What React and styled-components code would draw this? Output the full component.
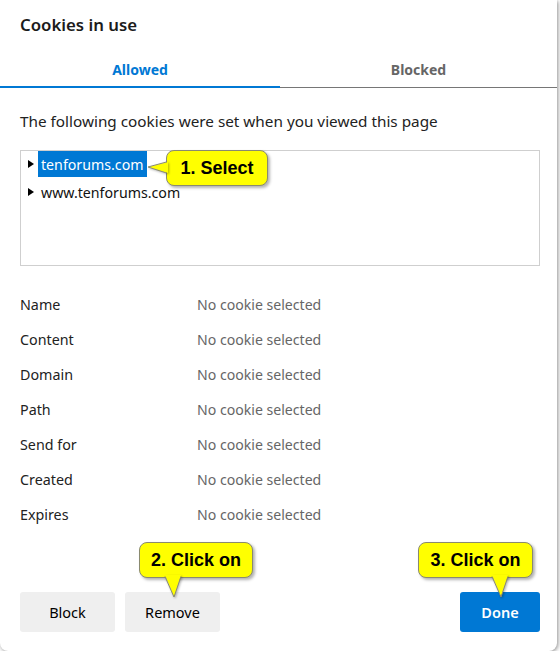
import { Fragment } from "react";
import styled, { createGlobalStyle } from "styled-components";

const GlobalStyle = createGlobalStyle`
  html, body {
    margin: 0;
    padding: 0;
    background: #fff;
  }
  body {
    font-family: "Noto Sans", "Open Sans", sans-serif;
  }
`;

const Dialog = styled.div`
  width: 557px;
  height: 651px;
  background: #fff;
  border-radius: 0 0 8px 8px;
  box-shadow: 1px 1px 4px rgba(0, 0, 0, 0.45);
  display: flex;
  flex-direction: column;
  box-sizing: border-box;
`;

const Title = styled.h1`
  margin: 0;
  padding: 13px 20px 0;
  font-size: 16.8px;
  line-height: 24px;
  font-weight: 600;
  color: #1b1b1b;
`;

const Tabs = styled.div`
  margin-top: 15px;
  display: grid;
  grid-template-columns: 280px 1fr;
`;

const Tab = styled.div`
  height: 34px;
  display: flex;
  align-items: center;
  justify-content: center;
  font-size: 14px;
  font-weight: 700;
  color: ${({ active }) => (active ? "#0078d4" : "#666")};
  border-bottom: ${({ active }) => (active ? "2px solid #0078d4" : "1px solid #767676")};
  padding-bottom: ${({ active }) => (active ? "0" : "1px")};
`;

const Body = styled.div`
  padding: 0 17px 0 20px;
`;

const Intro = styled.p`
  margin: 22px 0 0;
  font-size: 15.3px;
  line-height: 22px;
  color: #222;
`;

const TreeBox = styled.div`
  position: relative;
  margin-top: 18px;
  width: 520px;
  height: 116px;
  border: 1px solid #cfcfcf;
  box-sizing: border-box;
  padding: 0 0 0 7px;
  display: flex;
  flex-direction: column;
  gap: 2px;
`;

const TreeItem = styled.div`
  height: 26px;
  display: flex;
  align-items: center;
  gap: 4px;
`;

const Caret = styled.span`
  width: 0;
  height: 0;
  border-top: 4px solid transparent;
  border-bottom: 4px solid transparent;
  border-left: 6px solid #000;
`;

const ItemLabel = styled.span`
  height: 26px;
  display: flex;
  align-items: center;
  padding: 0 3px;
  font-size: 14.2px;
  color: ${({ selected }) => (selected ? "#fff" : "#111")};
  background: ${({ selected }) => (selected ? "#0078d4" : "transparent")};
`;

const Details = styled.div`
  margin-top: 21px;
  display: grid;
  grid-template-columns: 177px 1fr;
  grid-auto-rows: 35px;
  align-items: center;
  font-size: 14.3px;
`;

const Label = styled.div`
  color: #222;
`;

const Value = styled.div`
  color: #666;
  font-size: 14.1px;
`;

const Footer = styled.div`
  margin-top: auto;
  padding: 0 17px 19px 20px;
  display: flex;
  align-items: center;
  gap: 10px;
`;

const Anchor = styled.div`
  position: relative;
  margin-left: ${({ push }) => (push ? "auto" : "0")};
`;

const Button = styled.button`
  height: 40px;
  width: ${({ w }) => w}px;
  border: none;
  border-radius: 3px;
  font-family: "Noto Sans", "Open Sans", sans-serif;
  font-size: 14.5px;
  font-weight: ${({ primary }) => (primary ? 600 : 400)};
  background: ${({ primary }) => (primary ? "#0078d4" : "#efefef")};
  color: ${({ primary }) => (primary ? "#fff" : "#000")};
  padding: 0;
`;

const Callout = styled.div`
  position: absolute;
  left: ${({ x }) => x}px;
  top: ${({ y }) => y}px;
  width: ${({ w }) => w}px;
  height: 36px;
  box-sizing: border-box;
  background: #ffff00;
  border: 1px solid #8a8a70;
  border-radius: 8px;
  box-shadow: 2px 2px 3px rgba(0, 0, 0, 0.3);
  display: flex;
  align-items: center;
  justify-content: center;
  font-family: "Liberation Sans", Arial, sans-serif;
  font-weight: 700;
  font-size: 18px;
  color: #000;
  z-index: 2;
`;

const Pointer = styled.svg`
  position: absolute;
  overflow: visible;
  filter: drop-shadow(1px 1px 1px rgba(0, 0, 0, 0.3));
`;

const DownPointer = ({ left }) => (
  <Pointer width="16" height="24" style={{ left, top: 32 }} viewBox="0 0 16 24">
    <path d="M0 0 L9 22 L16 0 Z" fill="#ffff00" />
    <path d="M0 1.5 L9 22 L16 1.5" fill="none" stroke="#8a8a70" strokeWidth="1" />
  </Pointer>
);

const LeftPointer = () => (
  <Pointer width="20" height="12" style={{ left: -19, top: 11 }} viewBox="0 0 20 12">
    <path d="M20 0 L0 5 L20 11 Z" fill="#ffff00" />
    <path d="M18.5 0 L0 5 L18.5 11" fill="none" stroke="#8a8a70" strokeWidth="1" />
  </Pointer>
);

const rows = ["Name", "Content", "Domain", "Path", "Send for", "Created", "Expires"];

export default function App() {
  return (
    <>
      <GlobalStyle />
      <Dialog>
        <Title>Cookies in use</Title>
        <Tabs>
          <Tab active>Allowed</Tab>
          <Tab>Blocked</Tab>
        </Tabs>
        <Body>
          <Intro>The following cookies were set when you viewed this page</Intro>
          <TreeBox>
            <TreeItem>
              <Caret />
              <ItemLabel selected>tenforums.com</ItemLabel>
            </TreeItem>
            <TreeItem>
              <Caret />
              <ItemLabel>www.tenforums.com</ItemLabel>
            </TreeItem>
            <Callout x={145} y={-1} w={102}>
              1. Select
              <LeftPointer />
            </Callout>
          </TreeBox>
          <Details>
            {rows.map((r) => (
              <Fragment key={r}>
                <Label>{r}</Label>
                <Value>No cookie selected</Value>
              </Fragment>
            ))}
          </Details>
        </Body>
        <Footer>
          <Anchor>
            <Button w={95}>Block</Button>
          </Anchor>
          <Anchor>
            <Button w={95}>Remove</Button>
            <Callout x={14} y={-50} w={114}>
              2. Click on
              <DownPointer left={25} />
            </Callout>
          </Anchor>
          <Anchor push>
            <Button w={80} primary>
              Done
            </Button>
            <Callout x={-42} y={-50} w={115}>
              3. Click on
              <DownPointer left={73} />
            </Callout>
          </Anchor>
        </Footer>
      </Dialog>
    </>
  );
}
